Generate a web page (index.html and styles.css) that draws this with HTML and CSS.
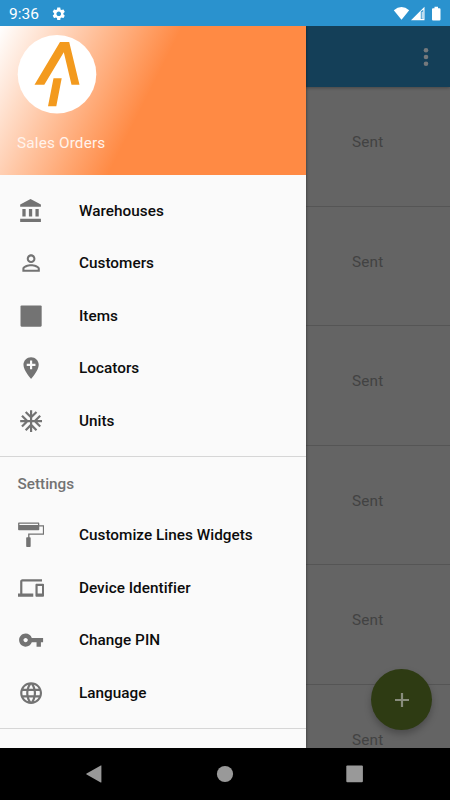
FILE: index.html
```html
<!DOCTYPE html>
<html lang="en">
<head>
<meta charset="utf-8">
<title>Sales Orders</title>
<link rel="stylesheet" href="styles.css">
</head>
<body>
<div class="phone">
  <header class="status">
    <span class="clock">9:36</span>
    <svg class="gear" viewBox="0 0 24 24"><path d="M19.14 12.94c.04-.3.06-.61.06-.94 0-.32-.02-.64-.07-.94l2.03-1.58c.18-.14.23-.41.12-.61l-1.92-3.32c-.12-.22-.37-.29-.59-.22l-2.39.96c-.5-.38-1.03-.7-1.62-.94l-.36-2.54c-.04-.24-.24-.41-.48-.41h-3.84c-.24 0-.43.17-.47.41l-.36 2.54c-.59.24-1.13.57-1.62.94l-2.39-.96c-.22-.08-.47 0-.59.22L2.74 8.87c-.12.21-.08.47.12.61l2.03 1.58c-.05.3-.09.63-.09.94s.02.64.07.94l-2.03 1.58c-.18.14-.23.41-.12.61l1.92 3.32c.12.22.37.29.59.22l2.39-.96c.5.38 1.03.7 1.62.94l.36 2.54c.05.24.24.41.48.41h3.84c.24 0 .44-.17.47-.41l.36-2.54c.59-.24 1.13-.56 1.62-.94l2.39.96c.22.08.47 0 .59-.22l1.92-3.32c.12-.22.07-.47-.12-.61l-2.01-1.58zM12 15.6c-1.98 0-3.6-1.62-3.6-3.6s1.62-3.6 3.6-3.6 3.6 1.62 3.6 3.6-1.62 3.600-3.600 3.600z"/></svg>
    <svg class="signals" viewBox="0 0 50 16">
      <path d="M.8 4.200Q8.500-2.200 16.200 4.200L8.500 13.800z"/>
      <path d="M31.500 .7V14.300H18z"/>
      <path class="signal-gap" d="M27.800 5.600L30.300 3.800V13H27.800z"/>
      <path d="M28.700 5.800h1v7h-1z"/>
      <path d="M41.500.8h3.500v1.400h1.500q1 0 1 1V13.400q0 1-1 1h-6.500q-1 0-1-1V3.200q0-1 1-1h1.500z"/>
    </svg>
  </header>
  <main class="app">
    <div class="appbar">
      <svg class="more" viewBox="0 0 6 20"><circle cx="3" cy="3.200" r="2.300"/><circle cx="3" cy="10" r="2.300"/><circle cx="3" cy="16.700" r="2.300"/></svg>
    </div>
    <ul class="orders">
      <li>Sent</li><li>Sent</li><li>Sent</li><li>Sent</li><li>Sent</li><li>Sent</li>
    </ul>
    <div class="fab"><svg viewBox="0 0 14 14"><path d="M5.900 0h2.200v5.900H14v2.200H8.100V14H5.900V8.100H0V5.900h5.900z"/></svg></div>
    <nav class="drawer">
      <div class="banner">
        <svg class="logo" viewBox="0 0 80 80"><circle cx="40" cy="40.200" r="39.300"/><path d="M43 8h9.200L62.500 50.800h-8L46.800 18.300 27.300 50.800h-9.800zM36.500 44.300h8.200L39.300 72.300h-8.300z"/></svg>
        <span>Sales Orders</span>
      </div>
      <ul class="menu">
        <li><svg viewBox="0 0 24 24"><path d="M4 10v7h3v-7H4zm6 0v7h3v-7h-3zM2 22h19v-3H2v3zm14-12v7h3v-7h-3zm-4.500-9L2 6v2h19V6l-9.500-5z"/></svg>Warehouses</li>
        <li><svg viewBox="0 0 24 24"><path d="M12 5.900c1.160 0 2.100.94 2.100 2.100s-.94 2.100-2.100 2.100S9.900 9.160 9.900 8s.94-2.100 2.100-2.100m0 9c2.970 0 6.100 1.460 6.100 2.100v1.100H5.900V17c0-.64 3.130-2.100 6.100-2.100M12 4C9.790 4 8 5.790 8 8s1.790 4 4 4 4-1.790 4-4-1.790-4-4-4zm0 9c-2.670 0-8 1.340-8 4v3h16v-3c0-2.660-5.330-4-8-4z"/></svg>Customers</li>
        <li><svg viewBox="0 0 24 24"><rect x="2.300" y="2.300" width="19.400" height="19.400" rx="1"/></svg>Items</li>
        <li><svg viewBox="0 0 24 24"><path d="M12 2C8.140 2 5 5.140 5 9c0 5.250 7 13 7 13s7-7.750 7-13c0-3.860-3.140-7-7-7zm4 8h-3v3h-2v-3H8V8h3V5h2v3h3v2z"/></svg>Locators</li>
        <li><svg viewBox="0 0 24 24"><path d="M22 11h-4.170l3.240-3.240-1.410-1.420L15 11h-2V9l4.660-4.660-1.420-1.410L13 6.170V2h-2v4.170L7.760 2.930 6.340 4.340 11 9v2H9L4.340 6.340 2.930 7.760 6.170 11H2v2h4.170l-3.240 3.240 1.410 1.420L9 13h2v2l-4.660 4.660 1.420 1.410L11 17.830V22h2v-4.170l3.240 3.240 1.420-1.410L13 15v-2h2l4.660 4.660 1.410-1.420L17.830 13H22z"/></svg>Units</li>
      </ul>
      <h2>Settings</h2>
      <ul class="menu settings">
        <li><svg viewBox="0 0 24 24"><path fill-rule="evenodd" d="M.8 .5h18q.7 0 .7.700v1.800h4.500v8.700H10.500v2.300h.4q.7 0 .7.700v7.600q0 .7-.7.700H8.200q-.7 0-.7-.7v-7.600q0-.7.700-.7h1.100v-3.500h13.500V4.200h-3.300v2.600q0 .7-.7.700H.8q-.7 0-.7-.7V1.200q0-.7.700-.7zM1.300 1.700v1h17v-1z"/></svg>Customize Lines Widgets</li>
        <li><svg viewBox="0 0 24 24"><path d="M4 6h18V4H4c-1.100 0-2 .9-2 2v11H0v3h14v-3H4V6zm19 2h-6c-.55 0-1 .45-1 1v10c0 .55.45 1 1 1h6c.55 0 1-.45 1-1V9c0-.55-.45-1-1-1zm-1 9h-4v-7h4v7z"/></svg>Device Identifier</li>
        <li><svg viewBox="0 0 24 24"><path d="M12.650 10C11.830 7.670 9.610 6 7 6c-3.310 0-6 2.690-6 6s2.690 6 6 6c2.610 0 4.830-1.670 5.650-4H17v4h4v-4h2v-4H12.650zM7 14c-1.100 0-2-.9-2-2s.9-2 2-2 2 .9 2 2-.9 2-2 2z"/></svg>Change PIN</li>
        <li><svg viewBox="0 0 24 24"><path d="M11.990 2C6.470 2 2 6.480 2 12s4.470 10 9.990 10C17.520 22 22 17.520 22 12S17.520 2 11.990 2zm6.930 6h-2.950c-.32-1.250-.78-2.450-1.380-3.560 1.840.63 3.370 1.910 4.330 3.560zM12 4.040c.83 1.200 1.480 2.530 1.910 3.960h-3.820c.43-1.430 1.080-2.760 1.910-3.960zM4.260 14C4.100 13.360 4 12.690 4 12s.1-1.360.26-2h3.380c-.08.66-.14 1.320-.14 2 0 .68.06 1.340.14 2H4.260zm.82 2h2.950c.32 1.250.78 2.450 1.380 3.560-1.840-.63-3.370-1.900-4.330-3.560zm2.950-8H5.080c.96-1.660 2.490-2.930 4.330-3.560C8.810 5.550 8.350 6.750 8.030 8zM12 19.960c-.83-1.200-1.480-2.530-1.910-3.960h3.820c-.43 1.430-1.080 2.760-1.910 3.960zM14.340 14H9.660c-.09-.66-.16-1.320-.16-2 0-.68.07-1.350.16-2h4.680c.09.65.16 1.320.16 2 0 .68-.07 1.340-.16 2zm.25 5.560c.6-1.110 1.060-2.310 1.380-3.560h2.950c-.96 1.650-2.490 2.930-4.330 3.560zM16.360 14c.08-.66.14-1.320.14-2 0-.68-.06-1.340-.14-2h3.380c.16.64.26 1.310.26 2s-.1 1.360-.26 2h-3.380z"/></svg>Language</li>
      </ul>
    </nav>
  </main>
  <footer class="navbar">
    <svg viewBox="0 0 18 18"><path d="M.6 8.400L14.800.4q.6-.3.600.4V17q0 .8-.7.400L.6 9.400q-.8-.5 0-1z"/></svg>
    <svg viewBox="0 0 18 18"><circle cx="9" cy="9" r="8.100"/></svg>
    <svg viewBox="0 0 18 18"><rect x=".3" y=".6" width="16.600" height="16.600" rx="1"/></svg>
  </footer>
</div>
</body>
</html>
```

FILE: styles.css
```css
* { box-sizing: border-box; }
body { margin: 0; font-family: Roboto, "Liberation Sans", sans-serif; }
ul { list-style: none; margin: 0; padding: 0; }
svg { display: block; }

.phone { display: flex; flex-direction: column; width: 450px; height: 800px; overflow: hidden; background: #000; }

.status { display: flex; align-items: center; height: 26px; flex: none; padding: 1px 7px 0 9px; background: #2a92ce; color: #fff; }
.status svg { fill: #fff; }
.clock { width: 42px; font-size: 15.500px; line-height: 26px; }
.gear { width: 15.500px; height: 15.500px; }
.signals { width: 50px; height: 16px; margin-left: auto; }
.status .signal-gap { fill: #2a92ce; }

.app { position: relative; flex: none; height: 722px; overflow: hidden; background: #646464; }
.appbar { display: flex; align-items: center; justify-content: flex-end; height: 61px; padding-right: 21px; background: #143f58; box-shadow: 0 1px 3px rgba(0, 0, 0, .3); }
.more { width: 6px; height: 20px; fill: #75797c; }
.orders li { height: 119.600px; padding: 45px 0 0 352px; border-bottom: 1px solid #555; color: #424242; font-size: 15.300px; line-height: 20px; letter-spacing: .2px; }

.fab { position: absolute; left: 371px; top: 643px; width: 61px; height: 61px; display: flex; align-items: center; justify-content: center; border-radius: 50%; background: #2e3b13; box-shadow: 0 4px 7px rgba(0, 0, 0, .25); }
.fab svg { width: 14px; height: 14px; fill: #888c7d; }

.drawer { position: absolute; left: 0; top: 0; width: 306px; height: 722px; background: #fafafa; box-shadow: 0 0 3px rgba(0, 0, 0, .5); overflow: hidden; }
.banner { height: 149px; padding: 8px 17px 0; background: linear-gradient(116.700deg, #fff 0, #ff8a44 48%, #ff8a44 100%); color: #fff3ec; font-size: 15.300px; letter-spacing: .17px; }
.banner span { display: block; margin-top: 19px; line-height: 20px; }
.logo { width: 80px; height: 80px; }
.logo circle { fill: #fff; }
.logo path { fill: #f39a1e; }

.menu { padding: 9.500px 0 8.500px; border-bottom: 1px solid #d6d6d6; }
.menu li { display: flex; align-items: center; gap: 35.100px; height: 52.500px; padding-left: 17.700px; color: #0c0c0c; font-size: 15.300px; font-weight: 500; letter-spacing: .03px; }
.menu svg { width: 26.200px; height: 26.200px; fill: #737373; }
.drawer h2 { height: 52.500px; margin: 0; padding-left: 17.500px; color: #737373; font-size: 15.300px; font-weight: 500; line-height: 54px; }
.settings { padding-top: 0; }

.navbar { display: flex; align-items: center; justify-content: space-between; height: 52px; padding: 0 86px 0 86px; }
.navbar svg { width: 18px; height: 18px; fill: #999; }
```
